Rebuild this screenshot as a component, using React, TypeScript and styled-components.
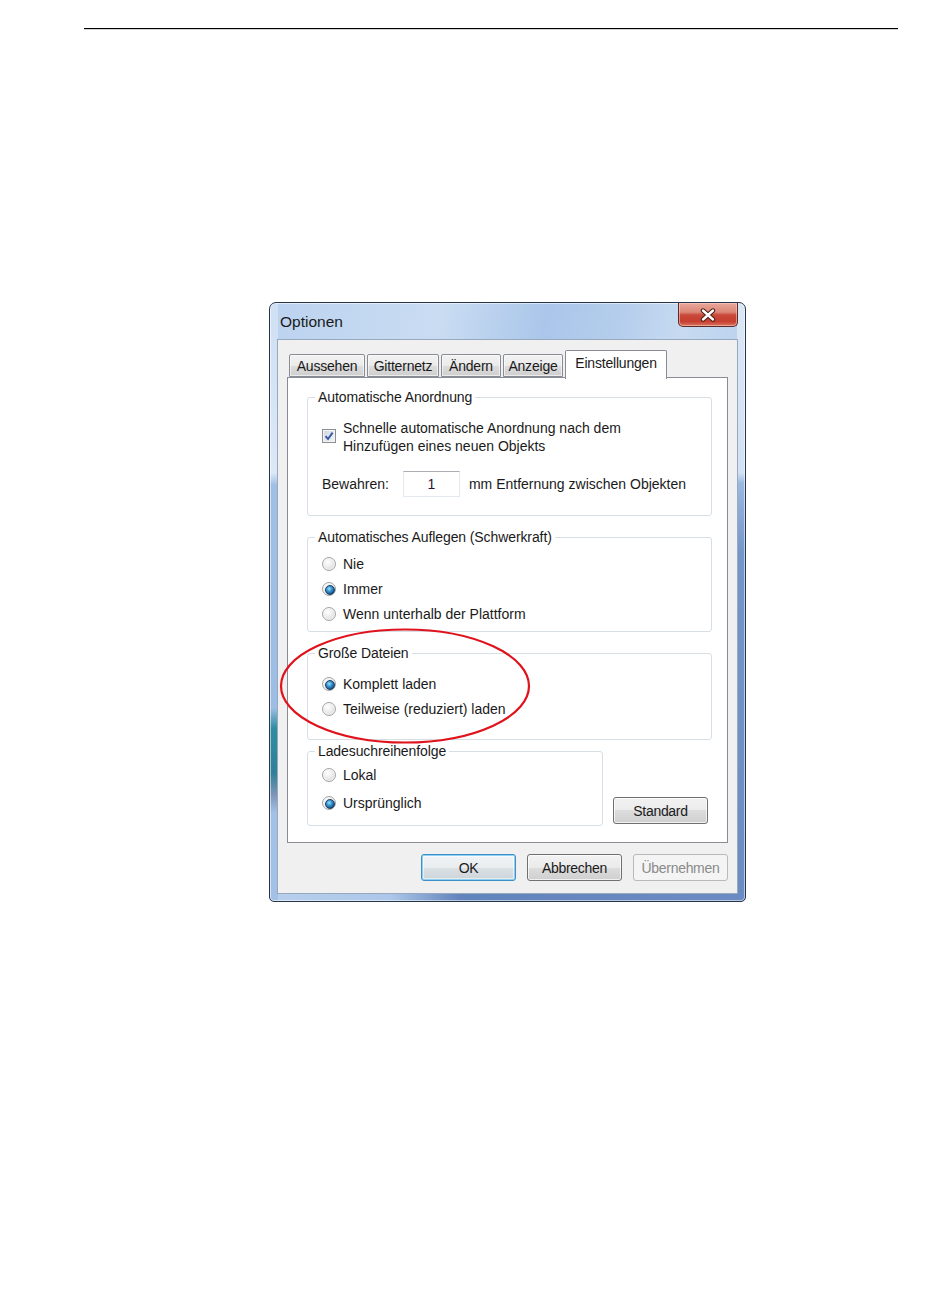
import React from 'react';
import styled, { createGlobalStyle } from 'styled-components';

const GlobalStyle = createGlobalStyle`
  html, body { margin: 0; padding: 0; background: #ffffff; }
  body { font-family: "Liberation Sans", Arial, sans-serif; color: #1c1c1c; }
  * { box-sizing: border-box; }
`;

const FONT = `"Liberation Sans", Arial, sans-serif`;

const Page = styled.div`
  width: 950px;
  height: 1293px;
  padding-top: 28px;
`;

const Rule = styled.div`
  margin-left: 84px;
  width: 814px;
  height: 1px;
  background: #000;
  box-shadow: 0 0.5px 0 rgba(0, 0, 0, 0.35);
`;

const Dialog = styled.div`
  position: relative;
  margin: 273px 0 0 269px;
  width: 477px;
  height: 600px;
  border: 1px solid #263548;
  border-radius: 7px 7px 5px 5px;
  display: flex;
  flex-direction: column;
  box-shadow: inset 0 0 0 1px rgba(255, 255, 255, 0.55);
  background:
    linear-gradient(to bottom, #dbe7f5 0, #d2e1f3 170px, #9ab9e0 180px, #7395c9 250px, #6a8cc2 100%) right top / 8px 100% no-repeat,
    linear-gradient(to bottom, #cfe0f3 0, #dbe8f6 170px, #a0bfe5 182px, #9dbde4 405px, #2f8da2 425px, #2f7f98 470px, #7f95b8 492px, #a3c1e6 510px, #a3c1e6 100%) left top / 8px 100% no-repeat,
    linear-gradient(to right, #b8cfed 0, #acc7e9 120px, #6284bc 190px, #6a8cc2 100%) left bottom / 100% 8px no-repeat,
    linear-gradient(100deg, #bcd2ef 0, #c9dcf2 30%, #aac6ea 48%, #b4cdec 60%, #c7daf1 72%, #a9c5ea 100%);
`;

const TitleBar = styled.div`
  height: 36px;
  display: flex;
  align-items: flex-start;
  padding-left: 10px;
`;

const Title = styled.div`
  font-family: ${FONT};
  font-size: 15.5px;
  line-height: 18px;
  margin-top: 10px;
  color: #1a1a1a;
`;

const CloseButton = styled.div`
  margin-left: auto;
  margin-right: 7px;
  width: 60px;
  height: 24px;
  border: 1px solid #5a2a24;
  border-top: none;
  border-radius: 0 0 5px 5px;
  background: linear-gradient(to bottom, #e9a99b 0%, #dc8676 40%, #c9493a 52%, #c63f30 80%, #d9745e 100%);
  box-shadow: inset 0 0 0 1px rgba(255, 210, 200, 0.55);
  display: flex;
  align-items: center;
  justify-content: center;
`;

const Client = styled.div`
  flex: 1;
  margin: 0 7px 7px 7px;
  background: #f0f0f0;
  border: 1px solid #98a8bf;
  padding: 10px 9px 0 9px;
  display: flex;
  flex-direction: column;
`;

const TabStrip = styled.div`
  height: 27px;
  display: flex;
  align-items: flex-end;
  gap: 2px;
  padding-left: 2px;
  position: relative;
  z-index: 1;
`;

const Tab = styled.div<{ $w: number; $active?: boolean }>`
  width: ${(p) => p.$w}px;
  height: ${(p) => (p.$active ? 29 : 23)}px;
  margin-bottom: ${(p) => (p.$active ? -2 : 0)}px;
  border: 1px solid #898c95;
  border-bottom: ${(p) => (p.$active ? 'none' : '1px solid #898c95')};
  border-radius: 2px 2px 0 0;
  background: ${(p) =>
    p.$active ? '#ffffff' : 'linear-gradient(to bottom, #f2f2f2 0%, #ebebeb 50%, #dddddd 50%, #cfcfcf 100%)'};
  box-shadow: ${(p) => (p.$active ? 'none' : 'inset 0 0 0 1px rgba(255,255,255,0.6)')};
  font-family: ${FONT};
  font-size: 14px;
  color: #1a1a1a;
  display: flex;
  justify-content: center;
  align-items: ${(p) => (p.$active ? 'flex-start' : 'center')};
  padding-top: ${(p) => (p.$active ? 4 : 0)}px;
  letter-spacing: -0.2px;
`;

const Panel = styled.div`
  height: 466px;
  background: #ffffff;
  border: 1px solid #898c95;
  padding: 11px 15px 0 19px;
  display: flex;
  flex-direction: column;
`;

const Group = styled.fieldset<{ $pt: number; $pb: number; $mt?: number; $w?: number }>`
  margin: ${(p) => p.$mt ?? 0}px 0 0 0;
  ${(p) => (p.$w ? `width: ${p.$w}px;` : '')}
  min-width: 0;
  border: 1px solid #d5dfe5;
  border-radius: 3px;
  padding: ${(p) => p.$pt}px 10px ${(p) => p.$pb}px 14px;
`;

const Legend = styled.legend`
  margin-left: -7px;
  padding: 0 3px;
  font-family: ${FONT};
  font-size: 14px;
  line-height: 16px;
  color: #1a1a1a;
  letter-spacing: -0.1px;
`;

const CheckRow = styled.div`
  display: flex;
  align-items: flex-start;
  gap: 7px;
`;

const CheckBox = styled.div`
  width: 14px;
  height: 14px;
  margin-top: 10px;
  border: 1px solid #8e8f8f;
  background: linear-gradient(135deg, #cfd6e0 0%, #e4e9ef 60%, #f2f4f6 100%);
  box-shadow: inset 0 0 0 1px #f4f4f4;
  display: flex;
  align-items: center;
  justify-content: center;
  flex: none;
`;

const Label = styled.div<{ $lh?: number }>`
  font-family: ${FONT};
  font-size: 14px;
  line-height: ${(p) => p.$lh ?? 18}px;
  color: #1a1a1a;
  white-space: nowrap;
`;

const KeepRow = styled.div`
  margin-top: 16px;
  display: flex;
  align-items: center;
`;

const NumberBox = styled.div`
  width: 57px;
  height: 26px;
  margin: 0 9px 0 14px;
  border: 1px solid #e3e9ef;
  border-top-color: #abadb3;
  background: #fff;
  display: flex;
  align-items: center;
  justify-content: center;
  font-family: ${FONT};
  font-size: 14px;
  color: #2b1438;
`;

const RadioRow = styled.div<{ $h: number }>`
  height: ${(p) => p.$h}px;
  display: flex;
  align-items: center;
  gap: 7px;
`;

const RadioDot = styled.span<{ $checked?: boolean }>`
  position: relative;
  width: 14px;
  height: 14px;
  flex: none;
  border-radius: 50%;
  border: 1px solid #a3a5a7;
  background: radial-gradient(circle at 40% 35%, #ffffff 0%, #ececec 45%, #cfcfcf 100%);
  box-shadow: inset 0 0 0 1px rgba(255, 255, 255, 0.6);
  &::after {
    content: '';
    display: ${(p) => (p.$checked ? 'block' : 'none')};
    position: absolute;
    left: 2px;
    top: 2px;
    width: 8px;
    height: 8px;
    border-radius: 50%;
    border: 1px solid #1d3c5c;
    background: radial-gradient(circle at 40% 35%, #9fe0fb 0%, #3c9ad6 35%, #12508a 75%, #0d3a66 100%);
  }
`;

const BottomRow = styled.div`
  display: flex;
  align-items: flex-end;
  margin-top: 3px;
`;

const StandardButtonWrap = styled.div`
  margin: 0 0 2px 10px;
`;

const Buttons = styled.div`
  display: flex;
  justify-content: flex-end;
  gap: 11px;
  margin-top: 11px;
`;

const PushButton = styled.div<{ $kind?: 'default' | 'normal' | 'disabled'; $h?: number }>`
  width: 95px;
  height: ${(p) => p.$h ?? 27}px;
  border-radius: 3px;
  font-family: ${FONT};
  font-size: 14px;
  letter-spacing: -0.3px;
  display: flex;
  align-items: center;
  justify-content: center;
  color: ${(p) => (p.$kind === 'disabled' ? '#8a8a8a' : '#1a1a1a')};
  border: 1px solid
    ${(p) => (p.$kind === 'default' ? '#3c8fc7' : p.$kind === 'disabled' ? '#b6babd' : '#707070')};
  background: ${(p) =>
    p.$kind === 'disabled'
      ? '#f4f4f4'
      : p.$kind === 'default'
      ? 'linear-gradient(to bottom, #f1f4f6 0%, #e9edf0 50%, #dbe1e5 50%, #cdd4d9 100%)'
      : 'linear-gradient(to bottom, #f2f2f2 0%, #ebebeb 50%, #dddddd 50%, #cfcfcf 100%)'};
  box-shadow: ${(p) =>
    p.$kind === 'default'
      ? 'inset 0 0 0 1px #8fd0f2, inset 0 0 0 2px rgba(255,255,255,0.5)'
      : p.$kind === 'disabled'
      ? 'none'
      : 'inset 0 0 0 1px rgba(255,255,255,0.7)'};
`;

const Annotation = styled.svg`
  position: absolute;
  left: 9px;
  top: 324px;
  pointer-events: none;
`;

type RadioProps = { label: string; checked?: boolean; h: number };
const Radio = ({ label, checked, h }: RadioProps) => (
  <RadioRow $h={h}>
    <RadioDot $checked={checked} />
    <Label>{label}</Label>
  </RadioRow>
);

export default function App() {
  return (
    <Page>
      <GlobalStyle />
      <Rule />
      <Dialog>
        <TitleBar>
          <Title>Optionen</Title>
          <CloseButton>
            <svg width="18" height="14" viewBox="0 0 18 14">
              <path d="M4 2.5 L14 11.5 M14 2.5 L4 11.5" stroke="#4a1b14" strokeWidth="4.4" strokeLinecap="round" />
              <path d="M4 2.5 L14 11.5 M14 2.5 L4 11.5" stroke="#ffffff" strokeWidth="2.4" strokeLinecap="round" />
            </svg>
          </CloseButton>
        </TitleBar>
        <Client>
          <TabStrip>
            <Tab $w={76}>Aussehen</Tab>
            <Tab $w={72}>Gitternetz</Tab>
            <Tab $w={60}>Ändern</Tab>
            <Tab $w={60}>Anzeige</Tab>
            <Tab $w={102} $active>
              Einstellungen
            </Tab>
          </TabStrip>
          <Panel>
            <Group $pt={14} $pb={18}>
              <Legend>Automatische Anordnung</Legend>
              <CheckRow>
                <CheckBox>
                  <svg width="10" height="10" viewBox="0 0 10 10">
                    <path d="M1.5 5.2 L4 8 L8.6 1.6" fill="none" stroke="#3a57a8" strokeWidth="1.9" />
                  </svg>
                </CheckBox>
                <Label>
                  Schnelle automatische Anordnung nach dem
                  <br />
                  Hinzufügen eines neuen Objekts
                </Label>
              </CheckRow>
              <KeepRow>
                <Label>Bewahren:</Label>
                <NumberBox>1</NumberBox>
                <Label>mm Entfernung zwischen Objekten</Label>
              </KeepRow>
            </Group>
            <Group $pt={6} $pb={5} $mt={13}>
              <Legend>Automatisches Auflegen (Schwerkraft)</Legend>
              <Radio h={25} label="Nie" />
              <Radio h={25} label="Immer" checked />
              <Radio h={25} label="Wenn unterhalb der Plattform" />
            </Group>
            <Group $pt={10} $pb={18} $mt={13}>
              <Legend>Große Dateien</Legend>
              <Radio h={25} label="Komplett laden" checked />
              <Radio h={25} label="Teilweise (reduziert) laden" />
            </Group>
            <BottomRow>
              <Group $pt={2} $pb={8} $w={296}>
                <Legend>Ladesuchreihenfolge</Legend>
                <Radio h={28} label="Lokal" />
                <Radio h={28} label="Ursprünglich" checked />
              </Group>
              <StandardButtonWrap>
                <PushButton $h={27}>Standard</PushButton>
              </StandardButtonWrap>
            </BottomRow>
          </Panel>
          <Buttons>
            <PushButton $kind="default">OK</PushButton>
            <PushButton>Abbrechen</PushButton>
            <PushButton $kind="disabled">Übernehmen</PushButton>
          </Buttons>
        </Client>
        <Annotation width="254" height="120" viewBox="0 0 254 120">
          <ellipse cx="126" cy="59" rx="124" ry="56.5" fill="none" stroke="#e0121c" strokeWidth="2.2" />
        </Annotation>
      </Dialog>
    </Page>
  );
}
